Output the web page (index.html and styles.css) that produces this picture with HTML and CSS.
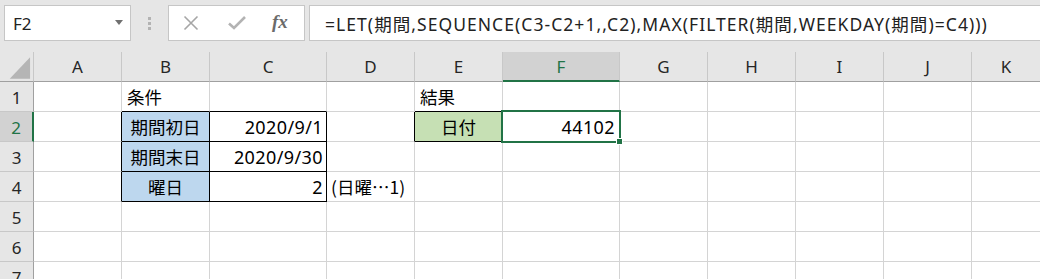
FILE: index.html
```html
<!DOCTYPE html>
<html lang="ja">
<head>
<meta charset="utf-8">
<link rel="stylesheet" href="styles.css">
</head>
<body>
<div class="app">
  <div class="toolbar">
    <div class="namebox">
      <span class="name">F2</span>
      <svg class="dd" width="8" height="5" viewBox="0 0 8 5"><path d="M0 0H8L4 5Z" fill="#707070"/></svg>
    </div>
    <div class="grip"><i></i><i></i><i></i></div>
    <div class="btns">
      <svg class="ico" width="16" height="16" viewBox="0 0 16 16"><path d="M1.5 1.5L14.5 14.5M14.5 1.5L1.5 14.5" stroke="#a6a6a6" stroke-width="1.6" fill="none"/></svg>
      <svg class="ico" width="18" height="16" viewBox="0 0 18 16"><path d="M1 8.5L6 13L17 2" stroke="#b3b3b3" stroke-width="2.6" fill="none"/></svg>
      <span class="fx">fx</span>
    </div>
    <div class="formula">=LET(期間,SEQUENCE(C3-C2+1,,C2),MAX(FILTER(期間,WEEKDAY(期間)=C4)))</div>
  </div>
  <div class="sheet">
    <div class="hd corner"><svg width="34" height="30" viewBox="0 0 34 30"><path d="M10 27H31V5Z" fill="#b5b5b5"/></svg></div>
    <div class="hd col">A</div>
    <div class="hd col">B</div>
    <div class="hd col">C</div>
    <div class="hd col">D</div>
    <div class="hd col">E</div>
    <div class="hd col sel-col">F</div>
    <div class="hd col">G</div>
    <div class="hd col">H</div>
    <div class="hd col">I</div>
    <div class="hd col">J</div>
    <div class="hd col last">K</div>

    <div class="hd row">1</div>
    <div class="c"></div>
    <div class="c bb">条件</div>
    <div class="c bb"></div>
    <div class="c"></div>
    <div class="c bb">結果</div>
    <div class="c"></div>
    <div class="c"></div><div class="c"></div><div class="c"></div><div class="c"></div><div class="c last"></div>

    <div class="hd row sel-row">2</div>
    <div class="c br"></div>
    <div class="c br bb blue center">期間初日</div>
    <div class="c br bb right">2020/9/1</div>
    <div class="c br"></div>
    <div class="c br bb green center">日付</div>
    <div class="c right active">44102<span class="frame"><span class="handle"></span></span></div>
    <div class="c"></div><div class="c"></div><div class="c"></div><div class="c"></div><div class="c last"></div>

    <div class="hd row">3</div>
    <div class="c br"></div>
    <div class="c br bb blue center">期間末日</div>
    <div class="c br bb right">2020/9/30</div>
    <div class="c"></div>
    <div class="c"></div>
    <div class="c"></div>
    <div class="c"></div><div class="c"></div><div class="c"></div><div class="c"></div><div class="c last"></div>

    <div class="hd row">4</div>
    <div class="c br"></div>
    <div class="c br bb blue center">曜日</div>
    <div class="c br bb right">2</div>
    <div class="c overflow">(日曜…1)</div>
    <div class="c"></div>
    <div class="c"></div>
    <div class="c"></div><div class="c"></div><div class="c"></div><div class="c"></div><div class="c last"></div>

    <div class="hd row">5</div>
    <div class="c"></div><div class="c"></div><div class="c"></div><div class="c"></div><div class="c"></div><div class="c"></div>
    <div class="c"></div><div class="c"></div><div class="c"></div><div class="c"></div><div class="c last"></div>

    <div class="hd row">6</div>
    <div class="c"></div><div class="c"></div><div class="c"></div><div class="c"></div><div class="c"></div><div class="c"></div>
    <div class="c"></div><div class="c"></div><div class="c"></div><div class="c"></div><div class="c last"></div>

    <div class="hd row">7</div>
    <div class="c"></div><div class="c"></div><div class="c"></div><div class="c"></div><div class="c"></div><div class="c"></div>
    <div class="c"></div><div class="c"></div><div class="c"></div><div class="c"></div><div class="c last"></div>
  </div>
</div>
</body>
</html>
```

FILE: styles.css
```css
* { box-sizing: border-box; }
html, body { margin: 0; padding: 0; background: #ffffff; overflow: hidden; }
body { width: 1040px; height: 279px; font-family: "Noto Sans CJK JP", "Noto Sans", sans-serif; color: #000; }

.app { width: 1040px; }

.toolbar {
  height: 52px;
  background: #e6e6e6;
  display: flex;
  align-items: flex-start;
  padding-top: 5px;
}
.namebox {
  margin-left: 4px;
  width: 127px;
  height: 36px;
  background: #fff;
  border: 1px solid #c6c6c6;
  display: flex;
  align-items: center;
  justify-content: space-between;
  padding: 0 7px 0 8px;
}
.name { font-family: "Noto Sans", "Noto Sans CJK JP", sans-serif; font-size: 17px; color: #222; }
.dd { margin-top: -1px; }
.grip {
  width: 37px;
  height: 36px;
  display: flex;
  flex-direction: column;
  align-items: center;
  justify-content: center;
  gap: 2px;
}
.grip i { display: block; width: 3px; height: 3px; background: #b3b3b3; }
.btns {
  width: 137px;
  height: 36px;
  background: #fff;
  border: 1px solid #c6c6c6;
  display: flex;
  align-items: center;
  padding-left: 14px;
}
.btns .ico:nth-child(1) { margin-right: 29px; }
.btns .ico:nth-child(2) { margin-right: 26px; }
.fx {
  font-family: "Liberation Serif", "DejaVu Serif", serif;
  font-style: italic;
  font-weight: bold;
  font-size: 19px;
  color: #6b6b6b;
  margin-top: -2px;
}
.formula {
  margin-left: 4px;
  flex: 1;
  height: 36px;
  margin-right: -2px;
  background: #fff;
  border: 1px solid #c6c6c6;
  padding-left: 15px;
  display: flex;
  align-items: center;
  font-family: "Noto Sans", "Noto Sans CJK JP", sans-serif;
  font-size: 17.5px;
  letter-spacing: 1.05px;
  color: #222;
  white-space: nowrap;
}

.sheet {
  display: grid;
  grid-template-columns: 34px 88px 88px 117px 88px 88px 117px 88px 88px 88px 88px 1fr;
  grid-auto-rows: 30px;
}
.hd {
  background: #e6e6e6;
  font-family: "Noto Sans", "Noto Sans CJK JP", sans-serif;
  font-size: 17px;
  color: #262626;
  display: flex;
  align-items: center;
  justify-content: center;
}
.corner { border-right: 1px solid #c8c8c8; border-bottom: 1px solid #a0a0a0; }
.corner svg { display: block; }
.col { border-right: 1px solid #c8c8c8; border-bottom: 1px solid #a0a0a0; }
.row { border-right: 1px solid #a0a0a0; border-bottom: 1px solid #c8c8c8; padding-top: 1px; }
.sel-col { background: #d2d2d2; color: #217346; border-bottom: 2px solid #217346; }
.sel-row { background: #d2d2d2; color: #217346; border-right: 2px solid #217346; }

.c {
  border-right: 1px solid #d4d4d4;
  border-bottom: 1px solid #d4d4d4;
  font-size: 17.5px;
  display: flex;
  align-items: center;
  padding: 0 4px 0 5px;
  white-space: nowrap;
  color: #000;
}
.c.last, .col.last { border-right: none; }
.br { border-right-color: #000; }
.bb { border-bottom-color: #000; }
.center { justify-content: center; padding: 0; }
.right {
  justify-content: flex-end;
  padding-right: 3px;
  font-family: "Noto Sans", "Noto Sans CJK JP", sans-serif;
  font-size: 18px;
  letter-spacing: 0.4px;
}
.blue { background: #bdd7ee; }
.green { background: #c6e0b4; }
.overflow { padding-left: 4px; overflow: visible; }
.active { position: relative; padding-right: 4px; }
.frame {
  position: absolute;
  left: -2px;
  top: -2px;
  right: -2px;
  bottom: -2px;
  border: 2px solid #217346;
}
.handle {
  position: absolute;
  right: -4px;
  bottom: -4px;
  width: 7px;
  height: 7px;
  background: #217346;
  border: 1px solid #fff;
}
```
